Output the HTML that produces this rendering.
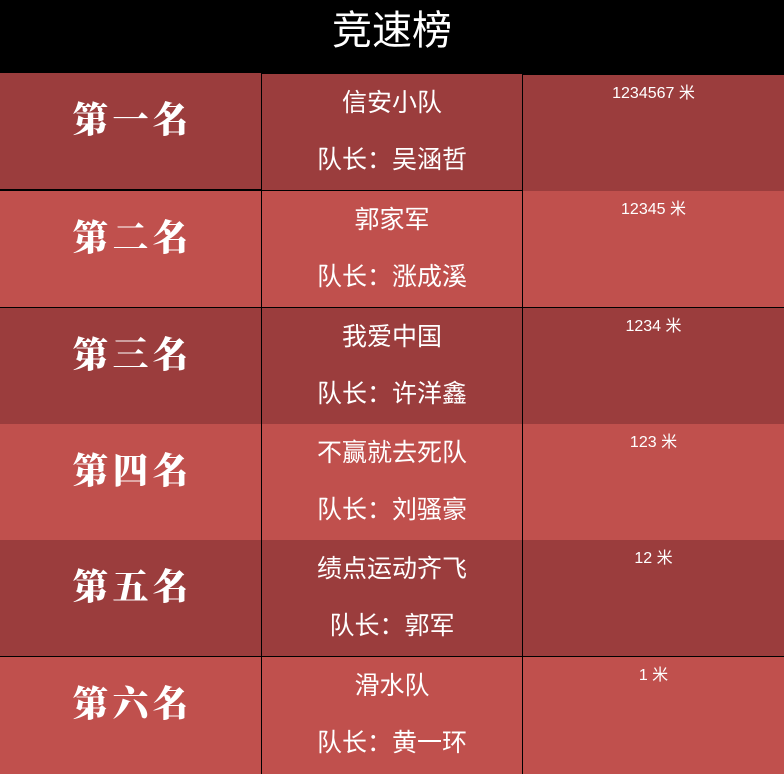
<!DOCTYPE html>
<html><head><meta charset="utf-8"><style>
*{margin:0;padding:0;box-sizing:border-box}
body{width:784px;height:774px;background:#000;position:relative;overflow:hidden;font-family:"Liberation Sans","Noto Sans CJK SC",sans-serif;color:#fff}
.t{position:absolute;left:0;top:0;width:784px;height:72px;text-align:center;font-size:40px;line-height:62px}
.c{position:absolute;height:116px}
.d{background:#9b3d3d}.l{background:#c0504d}
.r{font-family:"Noto Serif CJK SC",serif;font-weight:900;font-size:36px;text-align:center;padding-top:19px;letter-spacing:4px;text-indent:4px}
.n{text-align:center;font-size:25px;line-height:30px}
.n div:first-child{margin-top:14px}
.n div:last-child{margin-top:27px}
.m{text-align:center;font-size:16px;padding-top:4px}
</style></head><body>
<div class="t">竞速榜</div>
<div class="c d r" style="left:0;top:73px;width:261px">第一名</div>
<div class="c d n" style="left:262px;top:74px;width:260px"><div>信安小队</div><div>队长：吴涵哲</div></div>
<div class="c d m" style="left:523px;top:75px;width:261px">1234567 米</div>
<div class="c l r" style="left:0;top:191px;width:261px">第二名</div>
<div class="c l n" style="left:262px;top:191px;width:260px"><div>郭家军</div><div>队长：涨成溪</div></div>
<div class="c l m" style="left:523px;top:191px;width:261px">12345 米</div>
<div class="c d r" style="left:0;top:308px;width:261px">第三名</div>
<div class="c d n" style="left:262px;top:308px;width:260px"><div>我爱中国</div><div>队长：许洋鑫</div></div>
<div class="c d m" style="left:523px;top:308px;width:261px">1234 米</div>
<div class="c l r" style="left:0;top:424px;width:261px">第四名</div>
<div class="c l n" style="left:262px;top:424px;width:260px"><div>不赢就去死队</div><div>队长：刘骚豪</div></div>
<div class="c l m" style="left:523px;top:424px;width:261px">123 米</div>
<div class="c d r" style="left:0;top:540px;width:261px">第五名</div>
<div class="c d n" style="left:262px;top:540px;width:260px"><div>绩点运动齐飞</div><div>队长：郭军</div></div>
<div class="c d m" style="left:523px;top:540px;width:261px">12 米</div>
<div class="c l r" style="left:0;top:657px;width:261px;height:117px">第六名</div>
<div class="c l n" style="left:262px;top:657px;width:260px;height:117px"><div>滑水队</div><div>队长：黄一环</div></div>
<div class="c l m" style="left:523px;top:657px;width:261px;height:117px">1 米</div>
</body></html>
